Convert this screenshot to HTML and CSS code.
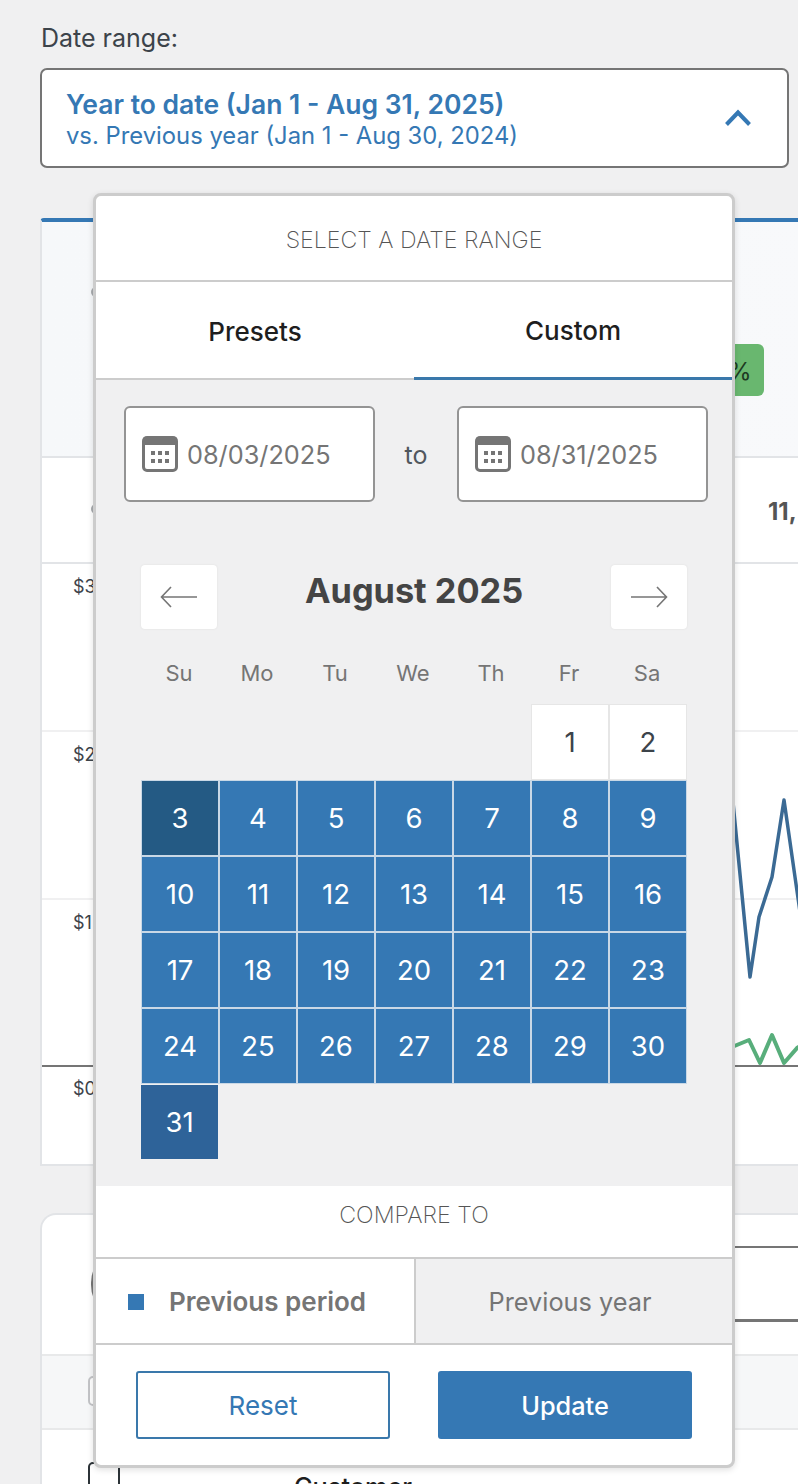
FILE: index.html
```html
<!DOCTYPE html>
<html lang="en">
<head>
<meta charset="utf-8">
<title>Date range</title>
<link rel="stylesheet" href="styles.css">
</head>
<body>
<div class="page">
  <div class="range-label">Date range:</div>
  <button class="range-btn" type="button">
    <span class="range-text">
      <span class="range-main">Year to date (Jan 1 - Aug 31, 2025)</span>
      <span class="range-sub">vs. Previous year (Jan 1 - Aug 30, 2024)</span>
    </span>
    <svg class="chev" viewBox="0 0 28 18" width="28" height="18"><path d="M2.5 15.5 14 3.5l11.5 12" fill="none" stroke="#3578b4" stroke-width="4"/></svg>
  </button>

  <section class="chart-card">
    <div class="kpi">
      <span class="dot dot-a"></span>
      <span class="badge">%</span>
    </div>
    <div class="stat">
      <span class="dot dot-b"></span>
      <b class="stat-val">11,</b>
    </div>
    <div class="chart">
      <div class="grid-row"><span>$3</span></div>
      <div class="grid-row"><span>$2</span></div>
      <div class="grid-row"><span>$1</span></div>
      <div class="grid-row last"><span>$0</span></div>
      <svg class="lines" viewBox="0 0 798 603" width="798" height="603">
        <path d="M732 230 750 415 759 355 772 315 784 238 800 350" fill="none" stroke="#3b6a94" stroke-width="3.5" stroke-linejoin="round"/>
        <path d="M732 485 749 478 760 501 772 473 784 501 797 486 800 484" fill="none" stroke="#58ae7b" stroke-width="4" stroke-linejoin="round"/>
      </svg>
    </div>
  </section>

  <section class="table-card">
    <div class="table-top"><div class="search-box"></div></div>
    <div class="table-head"><span class="check"></span></div>
    <div class="table-row"><span class="check dark"></span><span class="col-name">Customer</span></div>
  </section>

  <div class="popover">
    <div class="pop-title">SELECT A DATE RANGE</div>
    <div class="tabs">
      <div class="tab">Presets</div>
      <div class="tab active">Custom</div>
    </div>
    <div class="pop-body">
      <div class="inputs">
        <div class="date-input">
          <svg class="cal" viewBox="0 0 36 36" width="36" height="36"><use href="#cal-icon"/></svg>
          <span>08/03/2025</span>
        </div>
        <span class="to">to</span>
        <div class="date-input">
          <svg class="cal" viewBox="0 0 36 36" width="36" height="36"><use href="#cal-icon"/></svg>
          <span>08/31/2025</span>
        </div>
      </div>
      <div class="month-nav">
        <div class="nav-btn"><svg viewBox="0 0 38 26" width="38" height="26"><path d="M37 13H2M11 3 1.500 13 11 23" fill="none" stroke="#757575" stroke-width="1.600"/></svg></div>
        <div class="month-name">August 2025</div>
        <div class="nav-btn"><svg viewBox="0 0 38 26" width="38" height="26"><path d="M1 13h35M27 3l9.500 10L27 23" fill="none" stroke="#757575" stroke-width="1.600"/></svg></div>
      </div>
      <div class="weekdays"><span>Su</span><span>Mo</span><span>Tu</span><span>We</span><span>Th</span><span>Fr</span><span>Sa</span></div>
      <div class="days">
        <span class="empty"></span><span class="empty"></span><span class="empty"></span><span class="empty"></span><span class="empty"></span>
        <span class="day plain">1</span><span class="day plain">2</span>
        <span class="day start">3</span><span class="day sel">4</span><span class="day sel">5</span><span class="day sel">6</span><span class="day sel">7</span><span class="day sel">8</span><span class="day sel">9</span>
        <span class="day sel">10</span><span class="day sel">11</span><span class="day sel">12</span><span class="day sel">13</span><span class="day sel">14</span><span class="day sel">15</span><span class="day sel">16</span>
        <span class="day sel">17</span><span class="day sel">18</span><span class="day sel">19</span><span class="day sel">20</span><span class="day sel">21</span><span class="day sel">22</span><span class="day sel">23</span>
        <span class="day sel">24</span><span class="day sel">25</span><span class="day sel">26</span><span class="day sel">27</span><span class="day sel">28</span><span class="day sel">29</span><span class="day sel">30</span>
        <span class="day end">31</span>
      </div>
    </div>
    <div class="pop-title compare">COMPARE TO</div>
    <div class="compare-tabs">
      <div class="cmp on"><i class="swatch"></i>Previous period</div>
      <div class="cmp off">Previous year</div>
    </div>
    <div class="actions">
      <button class="btn outline" type="button">Reset</button>
      <button class="btn solid" type="button">Update</button>
    </div>
  </div>
</div>
<svg class="defs" width="0" height="0" aria-hidden="true"><defs>
  <g id="cal-icon">
    <rect x="1.500" y="1.500" width="33" height="33" rx="3.500" fill="#fff" stroke="#757575" stroke-width="3"/>
    <path d="M3 1h30a2 2 0 0 1 2 2v6H1V3a2 2 0 0 1 2-2z" fill="#757575"/>
    <path d="M9 15h4v4H9zM16 15h4v4h-4zM23 15h4v4h-4zM9 23h4v4H9zM16 23h4v4h-4zM23 23h4v4h-4z" fill="#757575"/>
  </g>
</defs></svg>
</body>
</html>
```
FILE: styles.css
```css
* { box-sizing: border-box; }
html, body { margin: 0; padding: 0; }
body {
  background: #f0f0f1;
  font-family: Inter, "Liberation Sans", sans-serif;
  color: #3c434a;
  width: 798px;
  height: 1484px;
  overflow: hidden;
}
.defs { position: absolute; }
.page { position: relative; width: 798px; height: 1484px; overflow: hidden; padding: 24px 0 0 40px; }
.range-label { font-size: 25px; line-height: 28px; color: #3c434a; padding-left: 1px; height: 44px; }
.range-btn {
  width: 749px; height: 100px; display: flex; align-items: center; justify-content: space-between;
  background: #fff; border: 2px solid #757575; border-radius: 7px; padding: 0 35px 0 24px;
  font-family: inherit; text-align: left; margin: 0;
}
.range-text { display: flex; flex-direction: column; color: #3578b4; padding-top: 4px; }
.range-main { font-size: 26.500px; font-weight: 600; line-height: 32px; }
.range-sub { font-size: 23.800px; line-height: 32px; }
.chart-card {
  margin-top: 50px; width: 800px; height: 948px; background: #fff;
  border-top: 4px solid #3578b4; border-left: 2px solid #e2e4e7; border-bottom: 2px solid #e2e4e7;
  border-radius: 4px 0 0 0;
}
.kpi { height: 236px; background: linear-gradient(90deg,#f6f8fa,#f8f9fb); border-bottom: 2px solid #e2e4e7; position: relative; }
.badge {
  position: absolute; left: 693px; top: 122px; width: 29px; height: 52px; background: #69b76f; border-radius: 0 6px 6px 0;
  font-size: 24px; line-height: 56px; color: #1e3a22; text-indent: -7px; overflow: hidden;
}
.dot { position: absolute; width: 10px; height: 10px; border-radius: 50%; background: #a7aaad; left: 49px; }
.dot-a { top: 65px; }
.dot-b { top: 46px; }
.stat { height: 106px; position: relative; border-bottom: 2px solid #e2e4e7; }
.stat-val { position: absolute; left: 726px; top: 39px; font-size: 24px; line-height: 30px; color: #555; font-weight: 700; }
.chart { position: relative; height: 600px; }
.grid-row { height: 168px; border-bottom: 2px solid #f0f0f1; padding: 12px 0 0 31px; font-size: 18px; line-height: 22px; color: #3c434a; }
.grid-row:nth-child(3) { height: 167px; border-bottom: 2px solid #757575; }
.grid-row.last { height: 97px; border-bottom: 0; padding-top: 11px; }
.lines { position: absolute; left: -42px; top: -2px; }
.table-card {
  margin-top: 47px; width: 800px; height: 300px; background: #fff;
  border: 2px solid #e2e4e7; border-right: 0; border-bottom: 0; border-radius: 16px 0 0 0;
}
.table-top { height: 141px; padding: 31px 0 0 49px; border-bottom: 2px solid #e8e9ea; }
.search-box { width: 740px; height: 76px; border: 2px solid #757575; border-right: 0; border-bottom-width: 3px; border-radius: 37px 0 0 37px; background: #fff; }
.table-head { height: 74px; background: #f6f7f8; border-bottom: 2px solid #e8e9ea; padding: 20px 0 0 46px; }
.check { display: block; width: 32px; height: 30px; border: 2px solid #c3c4c7; border-radius: 5px; background: #fff; }
.table-row { position: relative; padding: 32px 0 0 46px; }
.check.dark { border-color: #2c3338; height: 40px; border-radius: 5px 5px 0 0; }
.col-name { position: absolute; left: 252px; top: 42px; font-size: 25.300px; line-height: 30px; font-weight: 500; color: #1e1e1e; }

.popover {
  position: absolute; left: 93px; top: 193px; width: 642px; height: 1275px;
  background: #fff; border: 3px solid #ccc; border-radius: 8px; overflow: hidden;
  box-shadow: 0 2px 6px rgba(0,0,0,.12);
  display: flex; flex-direction: column;
}
.pop-title { height: 86px; flex: none; display: flex; align-items: center; justify-content: center; font-size: 23.200px; font-weight: 200; color: #555; border-bottom: 2px solid #ccc; padding-top: 3px; }
.tabs { height: 98px; flex: none; display: flex; border-bottom: 2px solid #ccc; }
.tab { width: 50%; display: flex; align-items: center; justify-content: center; font-size: 26px; font-weight: 500; color: #1e1e1e; padding-top: 2px; }
.tab.active { margin-bottom: -2px; border-bottom: 3px solid #3a78ab; padding-top: 1px; }
.pop-body { height: 806px; flex: none; background: #f0f0f1; padding: 26px 0 0 0; }
.inputs { display: flex; align-items: center; padding-left: 28px; }
.date-input { width: 251px; height: 96px; background: #fff; border: 2px solid #949494; border-radius: 6px; display: flex; align-items: center; padding-left: 16px; font-size: 25.300px; line-height: 32px; color: #757575; gap: 9px; }
.date-input span { padding-top: 2px; }
.to { width: 82px; text-align: center; font-size: 25px; color: #50575e; padding-top: 2px; }
.cal { flex: none; }
.month-nav { display: flex; justify-content: space-between; align-items: flex-start; margin: 63px 0 0 45px; width: 546px; }
.nav-btn { width: 76px; height: 64px; background: #fff; border-radius: 4px; box-shadow: 0 0 2px #ddd; display: flex; align-items: center; justify-content: center; }
.month-name { font-size: 34.300px; font-weight: 700; line-height: 50px; color: #444; padding-top: 1px; }
.weekdays { display: grid; grid-template-columns: repeat(7, 78px); margin: 29px 0 0 44px; height: 46px; font-size: 22px; line-height: 30px; color: #757575; text-align: center; }
.days { display: grid; grid-template-columns: repeat(7, 78px); grid-auto-rows: 76px; margin: 0 0 0 45px; width: 546px; }
.day { display: flex; align-items: center; justify-content: center; font-size: 27.500px; border: 1px solid #c9d8e6; }
.plain { background: #fff; color: #3c434a; border-color: #e6e6e6; }
.sel { background: #3578b4; color: #fff; }
.start { background: #245a84; color: #fff; }
.end { background: #2e6399; color: #fff; height: 74px; width: 77px; border: 0; margin-top: 1px; }
.pop-title.compare { height: 73px; padding: 0 0 14px; font-size: 23.300px; }
.compare-tabs { height: 86px; flex: none; display: flex; border-bottom: 2px solid #ccc; }
.cmp { display: flex; align-items: center; color: #757575; padding-top: 1px; }
.cmp.on { width: 320px; font-size: 26px; font-weight: 600; padding-left: 32px; background: #fff; border-right: 2px solid #ccc; }
.cmp.off { width: 316px; font-size: 25.300px; background: #f0f0f1; justify-content: center; padding-right: 8px; }
.swatch { width: 16px; height: 16px; background: #3578b4; margin-right: 25px; }
.actions { flex: 1; display: flex; justify-content: space-between; padding: 26px 40px 0; }
.btn { width: 254px; height: 68px; border-radius: 3px; font-family: inherit; font-size: 26px; margin: 0; padding: 0; }
.outline { background: #fff; border: 2px solid #3a78ab; color: #3578b4; }
.solid { background: #3578b4; border: 0; color: #fff; font-weight: 500; font-size: 25.300px; }
```
